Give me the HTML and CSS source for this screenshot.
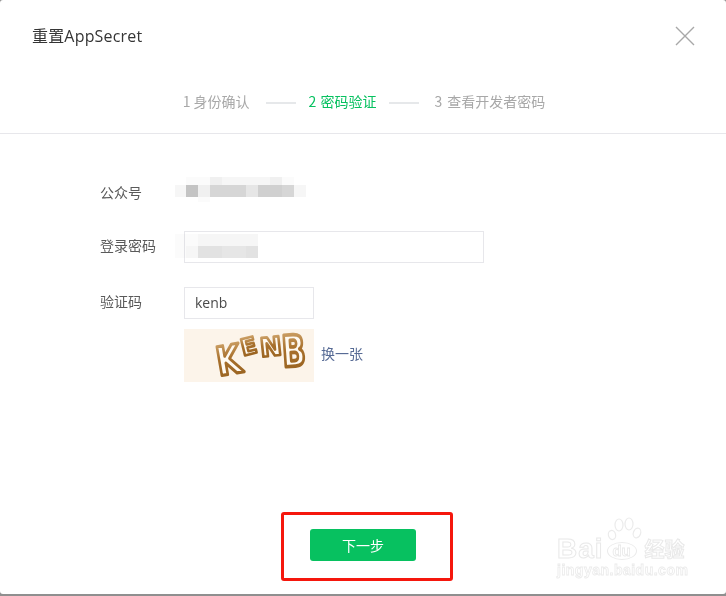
FILE: index.html
```html
<!DOCTYPE html>
<html lang="zh">
<head>
<meta charset="utf-8">
<title>重置AppSecret</title>
<link rel="stylesheet" href="styles.css">
</head>
<body>
<div class="dialog">
  <header class="head">
    <h1 class="title">重置AppSecret</h1>
    <svg class="close" width="20" height="20" viewBox="0 0 20 20"><path d="M1 1 L19 19 M19 1 L1 19" stroke="#a8a8a8" stroke-width="1.4" fill="none"/></svg>
  </header>
  <nav class="steps">
    <span>1 身份确认</span><i class="line l1"></i>
    <span class="on">2 密码验证</span><i class="line l2"></i>
    <span class="wide-step">3 查看开发者密码</span>
  </nav>
  <main class="form">
    <div class="row r1">
      <label class="lab">公众号</label>
      <div class="mosaic m1">
        <div class="mrow top"><b class="c0"></b><b class="c0"></b><b class="c2"></b><b class="c1"></b><b class="c1"></b><b class="c1"></b><b class="c1"></b><b class="c2"></b><b class="c0"></b></div>
        <div class="mrow mid"><b class="c1 thin"></b><b class="c7"></b><b class="c2"></b><b class="c5"></b><b class="c5"></b><b class="c5"></b><b class="c3"></b><b class="c6"></b><b class="c6"></b><b class="c5"></b><b class="c1"></b></div>
        <div class="mrow bot"><b class="c0"></b></div>
      </div>
    </div>
    <div class="row r2">
      <label class="lab up">登录密码</label>
      <div class="field wide">
        <div class="mosaic m2">
          <div class="mrow"><b class="c0 thin"></b><b class="c0"></b><b class="c1"></b><b class="c1"></b><b class="c1"></b><b class="c1"></b><b class="c1"></b></div>
          <div class="mrow"><b class="c0 thin"></b><b class="c1"></b><b class="c4b"></b><b class="c4b"></b><b class="c3"></b><b class="c3"></b><b class="c4b"></b></div>
        </div>
      </div>
    </div>
    <div class="row r3">
      <label class="lab up">验证码</label>
      <div class="stack">
        <div class="field short">kenb</div>
        <div class="cap-row">
          <svg class="captcha" width="130" height="53" viewBox="0 0 130 53">
            <defs>
              <linearGradient id="capg" x1="0" y1="0" x2="0" y2="1">
                <stop offset="0" stop-color="#d8b07a"/>
                <stop offset="0.45" stop-color="#a8702c"/>
                <stop offset="1" stop-color="#96601e"/>
              </linearGradient>
            </defs>
            <rect width="130" height="53" fill="#fcf4ea"/>
            <g class="cap-txt">
              <text transform="translate(35 47) rotate(-10) scale(1 1.25)" font-size="32">K</text>
              <text transform="translate(59 27) rotate(-14)" font-size="23">E</text>
              <text transform="translate(77 28) rotate(-6)" font-size="26">N</text>
              <text transform="translate(99 38) rotate(-4) scale(1 1.4)" font-size="31">B</text>
            </g>
          </svg>
          <a class="swap">换一张</a>
        </div>
      </div>
    </div>
  </main>
  <footer class="foot">
    <div class="mark"><button class="next">下一步</button></div>
  </footer>
  <div class="wm">
    <svg class="paw" width="36" height="28" viewBox="0 0 36 28">
      <g fill="#fff" stroke="#ebebeb" stroke-width="1.2">
        <ellipse cx="5" cy="18" rx="3.6" ry="4.6" transform="rotate(-15 5 18)"/>
        <ellipse cx="12" cy="8" rx="4" ry="6"/>
        <ellipse cx="22" cy="7" rx="4" ry="6"/>
        <ellipse cx="30" cy="16" rx="3.6" ry="5" transform="rotate(20 30 16)"/>
      </g>
    </svg>
    <div class="wm-top"><span class="wm-b">Bai</span><span class="wm-du">du</span><span class="wm-j">经验</span></div>
    <div class="wm-url">jingyan.baidu.com</div>
  </div>
</div>
</body>
</html>
```
FILE: styles.css
```css
* { box-sizing: border-box; }
html, body { margin: 0; padding: 0; }
body { width: 726px; height: 596px; background: #8f8f8f; overflow: hidden;
  font-family: "Noto Sans CJK SC", "Open Sans", sans-serif; }
.dialog { position: relative; width: 726px; height: 594px; background: #fff; border-radius: 3px;
  display: flex; flex-direction: column; }
.head { height: 72px; padding: 24px 31px 0 32px; display: flex; justify-content: space-between; align-items: flex-start; }
.title { margin: 0; font-size: 16px; font-weight: 400; line-height: 24px; color: #353535; letter-spacing: .18px;
  font-family: "Open Sans", "Noto Sans CJK SC", sans-serif; }
.close { margin-top: 2px; }
.steps { height: 62px; padding: 17px 0 0 2px; display: flex; justify-content: center; align-items: flex-start;
  font-size: 14px; line-height: 24px; color: #a8a8a8; border-bottom: 1px solid #e7e7eb; }
.steps .on { color: #07c160; word-spacing: 1px; }
.wide-step { word-spacing: 2px; }
.line { width: 30px; height: 2px; background: #e6e8ea; margin-top: 13px; }
.l1 { margin-left: 16px; margin-right: 13px; }
.l2 { margin-left: 13px; margin-right: 15px; }
.form { flex: 1; padding-top: 42px; }
.row { display: flex; padding-left: 100px; }
.lab { width: 84px; font-size: 14px; line-height: 32px; color: #5a5a5a; flex: none; }
.lab.up { line-height: 28px; }
.r1 { height: 32px; }
.r2 { margin-top: 23px; }
.r3 { margin-top: 24px; }
.mosaic { display: flex; flex-direction: column; }
.m1 { margin: 1px 0 0 -9px; }
.mrow { display: flex; height: 12px; }
.mrow b { width: 12px; height: 100%; display: block; flex: none; }
.mrow b.thin { width: 11px; }
.mrow.top { height: 8px; padding-left: 11px; }
.mrow.bot { height: 5px; padding-left: 23px; }
.c0 { background: #fbfbfb; } .c1 { background: #f6f6f6; } .c2 { background: #f0f0f0; }
.c3 { background: #e6e6e6; } .c4 { background: #dedede; } .c4b { background: #e2e2e2; } .c5 { background: #d6d6d6; }
.c6 { background: #d0d0d0; } .c7 { background: #c4c4c4; }
.field { border: 1px solid #e7e7eb; background: #fff; }
.wide { width: 300px; height: 32px; }
.m2 { margin: 2px 0 0 -10px; mix-blend-mode: multiply; }
.short { width: 130px; height: 32px; padding-left: 10px; font-size: 14px; line-height: 30px; color: #4a4a4a;
  font-family: "Open Sans", sans-serif; }
.stack { display: flex; flex-direction: column; }
.cap-row { display: flex; align-items: flex-start; margin-top: 10px; }
.captcha { display: block; }
.cap-txt text { font-family: "DejaVu Sans", sans-serif; font-weight: 700; fill: #fffaf2; stroke: url(#capg); stroke-width: 2.6; stroke-linejoin: round; }
.swap { margin: 13px 0 0 7px; font-size: 14px; line-height: 22px; color: #576b95; }
.foot { height: 82px; display: flex; padding-left: 281px; }
.mark { width: 172px; height: 69px; border: 3px solid #f5170d; border-radius: 3px; padding: 14px 0 0 26px; }
.next { display: block; width: 106px; height: 32px; border: 0; border-radius: 3px; background: #07c160; color: #fff;
  font: 14px/32px "Noto Sans CJK SC", sans-serif; padding: 0; }
.wm { position: absolute; left: 557px; top: 517px; width: 135px; height: 62px; color: #fff; }
.paw { position: absolute; left: 50px; top: 0; }
.wm-top { position: absolute; left: 0; top: 19px; width: 135px; display: flex; align-items: center; height: 26px; }
.wm-b { font: 700 28px/26px "Liberation Sans", sans-serif; letter-spacing: 1px; -webkit-text-stroke: 1px #e9e9e9; }
.wm-du { width: 30px; height: 18px; margin: 4px 0 0 3px; text-align: center; border: 1.2px solid #ebebeb; border-radius: 50%; background: #fff;
  font: 700 15px/15px "Liberation Sans", sans-serif; -webkit-text-stroke: .8px #e9e9e9; }
.wm-j { margin-left: 8px; font: 700 20px/26px "Noto Sans CJK SC", sans-serif; -webkit-text-stroke: 1px #e9e9e9; }
.wm-url { position: absolute; left: 0; top: 45px; font: 700 14px/16px "Liberation Sans", sans-serif; letter-spacing: .5px; -webkit-text-stroke: .8px #ebebeb; }
```
